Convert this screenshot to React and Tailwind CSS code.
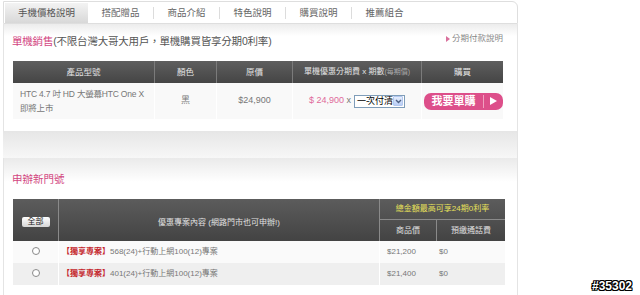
import React from "react";

const tabs = ["搭配贈品", "商品介紹", "特色說明", "購買說明", "推薦組合"];

function Radio() {
  return <div className="w-[8px] h-[8px] rounded-full border border-[#8a8a8a] bg-white" />;
}

export default function App() {
  return (
    <div className="w-[640px] h-[295px] bg-white overflow-hidden relative font-['Liberation_Sans','Noto_Sans_CJK_TC',sans-serif]">
      <div className="ml-[3px] w-[515px] flex flex-col">
        {/* Tabs */}
        <div className="h-[23px] mt-[1px] border border-[#dedede] rounded-tr-[6px] flex items-stretch pl-[1px] pt-[1px]">
          <div className="w-[83px] bg-[linear-gradient(to_bottom,#f3f3f3,#d8d8d8)] flex items-center justify-center text-[9.5px] text-[#555]">
            手機價格說明
          </div>
          {tabs.map((t, i) => (
            <div key={t} className="flex items-center">
              {i > 0 && <div className="w-px h-[12px] bg-[#dcdcdc]" />}
              <div className="w-[65px] flex items-center justify-center text-[9.5px] text-[#666]">{t}</div>
            </div>
          ))}
        </div>

        {/* Section 1 */}
        <div className="h-[107px] border-x border-[#e4e4e4] bg-[linear-gradient(to_bottom,#ececec,#ffffff_12px)] flex flex-col">
          <div className="mt-[11px] h-[14px] pl-[8px] pr-[14px] flex items-center justify-between">
            <div className="text-[10.5px] text-[#555] tracking-[-0.2px] whitespace-nowrap">
              <span className="text-[#d2467f]">單機銷售</span>(不限台灣大哥大用戶，單機購買皆享分期0利率)
            </div>
            <div className="flex items-center gap-[2px] mb-[7px] text-[8.5px] text-[#888] whitespace-nowrap">
              <svg width="4" height="6" viewBox="0 0 4 6"><path d="M0 0L4 3L0 6Z" fill="#d9709c" /></svg>
              分期付款說明
            </div>
          </div>
          <div className="mt-[12px] ml-[9px] w-[490px] flex flex-col">
            <div className="h-[22px] flex bg-[linear-gradient(to_bottom,#5e5e5e,#454545)] text-[8.5px] text-[#e4e4e4] whitespace-nowrap">
              <div className="w-[142px] flex items-center justify-center border-r border-[#7b7b7b]">產品型號</div>
              <div className="w-[62px] flex items-center justify-center border-r border-[#7b7b7b]">顏色</div>
              <div className="w-[76px] flex items-center justify-center border-r border-[#7b7b7b]">原價</div>
              <div className="w-[129px] flex items-center justify-center border-r border-[#7b7b7b] text-[8px]">
                單機優惠分期費 x 期數<span className="text-[#aaa] text-[7px]">(每期價)</span>
              </div>
              <div className="flex-1 flex items-center justify-center">購買</div>
            </div>
            <div className="h-[36px] flex bg-[#f9f9f9] text-[9px] text-[#777] whitespace-nowrap">
              <div className="w-[142px] pl-[7px] flex flex-col justify-center leading-[14px] border-r border-white text-[8.5px] tracking-[-0.2px]">
                <div>HTC 4.7 吋 HD 大螢幕HTC One X</div>
                <div>即將上市</div>
              </div>
              <div className="w-[62px] flex items-center justify-center border-r border-white">黑</div>
              <div className="w-[76px] flex items-center justify-center border-r border-white">$24,900</div>
              <div className="w-[129px] flex items-center justify-center gap-[3px] border-r border-white">
                <span>
                  <span className="text-[#e06a9a]">$ 24,900</span> x
                </span>
                <div className="h-[13px] w-[51px] border border-[#7f9db9] bg-white flex items-center justify-between pl-[2px] pr-px">
                  <span className="text-[9px] text-black leading-none">一次付清</span>
                  <div className="w-[11px] h-[10px] rounded-[1px] bg-[linear-gradient(to_bottom,#e6eefc,#b9cdf5)] border border-[#b4c8ef] flex items-center justify-center">
                    <svg width="7" height="5" viewBox="0 0 7 5"><path d="M1 1L3.5 3.5L6 1" stroke="#4d6185" strokeWidth="1.4" fill="none" /></svg>
                  </div>
                </div>
              </div>
              <div className="flex-1 flex items-center justify-end">
                <div className="h-[17px] w-[79px] rounded-[7px] bg-[#dd4f8a] flex items-stretch">
                  <div className="w-[59px] flex items-center justify-center text-white text-[11px] font-bold">我要單購</div>
                  <div className="w-px bg-[#f0a0bf] my-[2px]" />
                  <div className="flex-1 flex items-center justify-center">
                    <svg width="7" height="8" viewBox="0 0 7 8"><path d="M0 0L7 4L0 8Z" fill="#ffffff" /></svg>
                  </div>
                </div>
              </div>
            </div>
          </div>
        </div>

        {/* Gap band */}
        <div className="h-[27px] border-r border-[#e4e4e4] bg-[linear-gradient(to_bottom,#e6e6e6,#f7f7f7)]" />

        {/* Section 2 */}
        <div className="h-[138px] border-x border-[#e4e4e4] bg-[linear-gradient(to_bottom,#eaeaea,#ffffff_24px)] flex flex-col">
          <div className="mt-[15px] h-[14px] pl-[8px] flex items-center text-[10.5px] text-[#d2467f]">申辦新門號</div>
          <div className="mt-[12px] ml-[9px] w-[492px] flex flex-col">
            <div className="grid grid-cols-[46px_321px_57px_68px] grid-rows-[21px_21px] bg-[linear-gradient(to_bottom,#5c5c5c,#434343)] text-[8px] text-[#e0e0e0] whitespace-nowrap">
              <div className="row-span-2 flex items-center justify-center border-r border-[#8a8a8a] pt-[4px]">
                <div className="w-[28px] h-[10px] rounded-[2px] bg-[linear-gradient(to_bottom,#ffffff,#d6d6d6)] text-[#222] text-[8px] leading-[10px] text-center">全部</div>
              </div>
              <div className="row-span-2 flex items-center justify-center border-r border-[#8a8a8a] pt-[5px]">優惠專案內容 (網路門市也可申辦!)</div>
              <div className="col-span-2 flex items-center justify-center border-b border-[#8a8a8a] text-[#e8e25a]">總金額最高可享24期0利率</div>
              <div className="flex items-center justify-center border-r border-[#8a8a8a]">商品價</div>
              <div className="flex items-center justify-center">預繳通話費</div>
            </div>
            {[
              { p: "568(24)+行動上網100(12)專案", price: "$21,200", bg: "bg-[#fafafa]" },
              { p: "401(24)+行動上網100(12)專案", price: "$21,400", bg: "bg-[#efefef]" },
            ].map((r) => (
              <div key={r.p} className={`h-[22px] flex text-[8px] text-[#777] whitespace-nowrap ${r.bg}`}>
                <div className="w-[46px] flex items-center justify-center border-r border-white pb-[2px]">
                  <Radio />
                </div>
                <div className="w-[321px] flex items-center pl-[3px] border-r border-white">
                  <span className="text-[#c4262c] font-bold">【獨享專案】</span>
                  {r.p}
                </div>
                <div className="w-[57px] flex items-center pl-[7px]">{r.price}</div>
                <div className="flex-1 flex items-center pl-[2px]">$0</div>
              </div>
            ))}
          </div>
        </div>
      </div>

      <div className="absolute left-[592px] top-[279px] text-[12px] leading-[14px] font-bold text-white whitespace-nowrap [text-shadow:-1px_0_#000,1px_0_#000,0_-1px_#000,0_1px_#000,1px_1px_#000,-1px_-1px_#000,1px_-1px_#000,-1px_1px_#000]">
        #35302
      </div>
    </div>
  );
}
